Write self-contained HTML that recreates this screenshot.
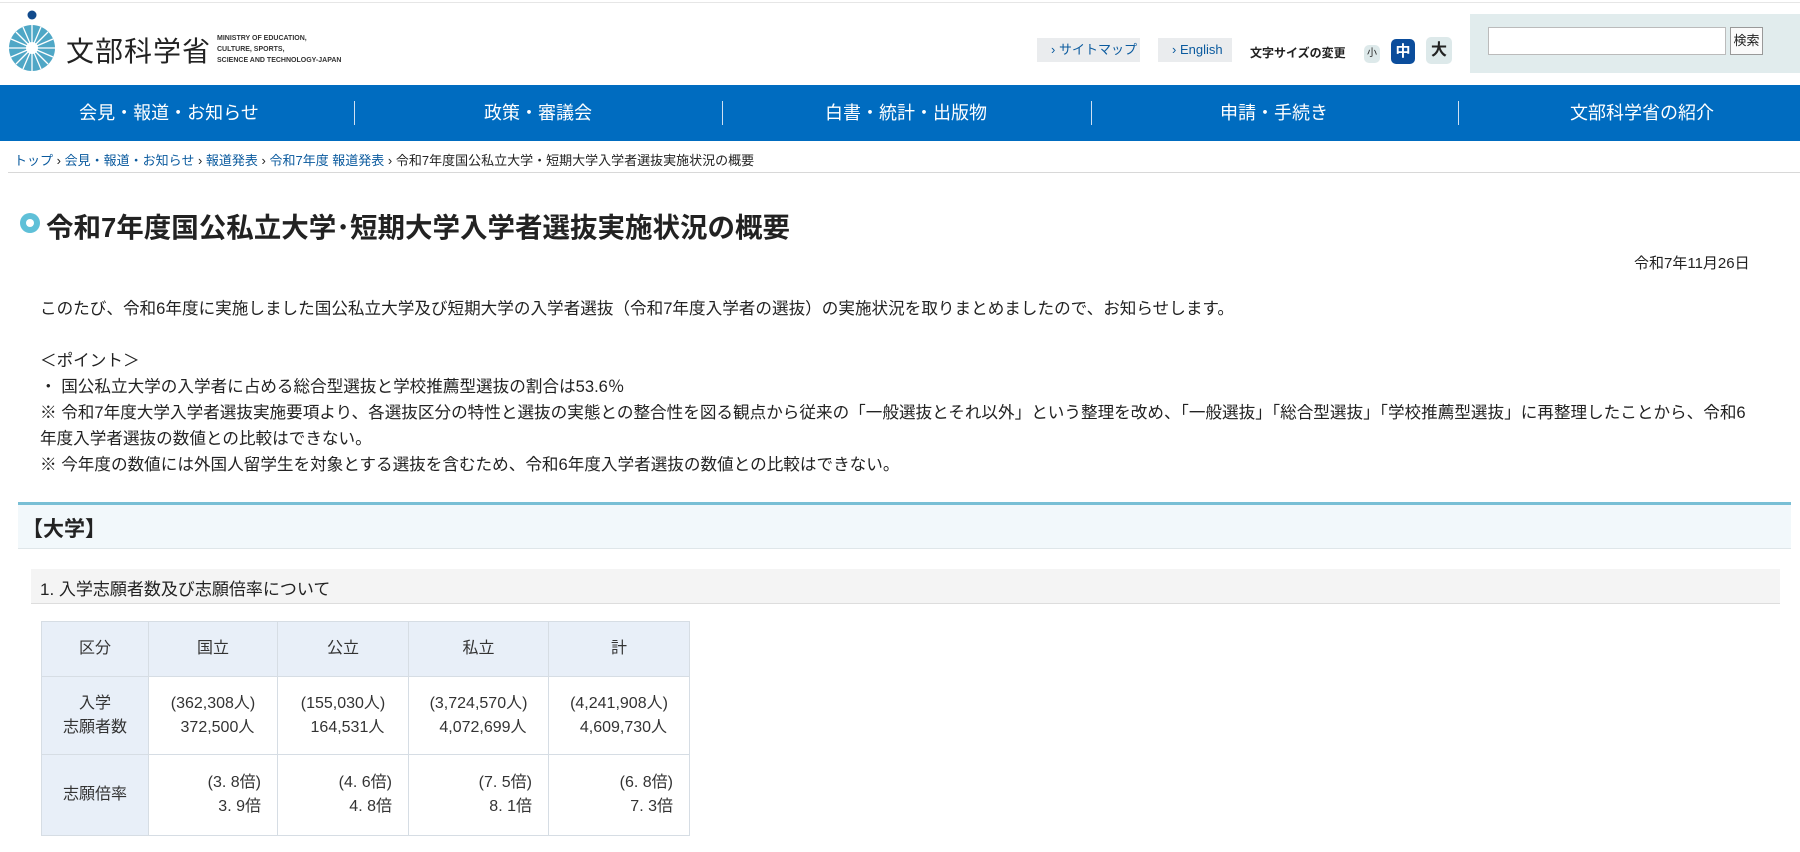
<!DOCTYPE html>
<html><head><meta charset="utf-8"><style>
*{margin:0;padding:0;box-sizing:border-box}
body{width:1800px;height:852px;overflow:hidden;background:#fff;font-family:"Liberation Sans","Noto Sans CJK JP",sans-serif;color:#222;position:relative}
.a{position:absolute;white-space:nowrap}
.nav{position:absolute;left:0;top:85px;width:1800px;height:56px;background:#006cc0}
.nav .i{position:absolute;top:0;height:56px;line-height:56px;color:#fff;font-size:18px;transform:translateX(-50%)}
.nav .s{position:absolute;top:16px;width:1px;height:24px;background:#cfe0f2}
.btn{position:absolute;background:#eaecee;color:#0a5a9e;font-size:13px;line-height:24px;padding-left:14px}
table{position:absolute;left:41px;top:621px;border-collapse:collapse;font-size:16px;color:#333}
td{border:1px solid #d6dde4;text-align:center;line-height:24px}
td.h{background:#e8eff8}
</style></head><body>
<div class="a" style="left:0;top:2px;width:1800px;height:1px;background:#e6e6e6"></div>
<svg class="a" style="left:6px;top:8px" width="54" height="64" viewBox="0 0 54 64">
<circle cx="26" cy="7" r="4.5" fill="#114a8c"/>
<circle cx="26" cy="40" r="23" fill="#4fa7c6"/>
<circle cx="26" cy="40" r="6" fill="#fff"/>
<g stroke="#fff" stroke-width="1.3">
<line x1="26" y1="17" x2="26" y2="63"/><line x1="3" y1="40" x2="49" y2="40"/>
<line x1="10" y1="24" x2="42" y2="56"/><line x1="42" y1="24" x2="10" y2="56"/>
<line x1="17" y1="19" x2="35" y2="61"/><line x1="35" y1="19" x2="17" y2="61"/>
<line x1="5" y1="31" x2="47" y2="49"/><line x1="47" y1="31" x2="5" y2="49"/></g>
</svg>
<div class="a" style="left:66px;top:30px;font-size:28px;letter-spacing:1px;color:#222">文部科学省</div>
<div class="a" style="left:217px;top:33px;font-size:7px;line-height:11px;color:#333;font-weight:bold">MINISTRY OF EDUCATION,<br>CULTURE, SPORTS,<br>SCIENCE AND TECHNOLOGY-JAPAN</div>
<div class="btn" style="left:1037px;top:38px;width:103px">› サイトマップ</div>
<div class="btn" style="left:1158px;top:38px;width:74px">› English</div>
<div class="a" style="left:1250px;top:44px;font-size:12px;font-weight:bold">文字サイズの変更</div>
<div class="a" style="left:1364px;top:45px;width:16px;height:18px;background:#dde9ea;border-radius:5px;font-size:10px;text-align:center;line-height:18px">小</div>
<div class="a" style="left:1391px;top:39px;width:24px;height:25px;background:#0b4d9c;border-radius:5px;font-size:15px;color:#fff;text-align:center;line-height:25px;font-weight:bold">中</div>
<div class="a" style="left:1426px;top:37px;width:26px;height:27px;background:#dde9ea;border-radius:5px;font-size:16px;text-align:center;line-height:27px;font-weight:bold">大</div>
<div class="a" style="left:1470px;top:14px;width:330px;height:59px;background:#e1eced"></div>
<div class="a" style="left:1488px;top:27px;width:238px;height:28px;background:#fff;border:1px solid #bbb"></div>
<div class="a" style="left:1730px;top:27px;width:33px;height:28px;background:#fafafa;border:1px solid #999;font-size:13px;text-align:center;line-height:26px">検索</div>
<div class="nav">
<div class="i" style="left:169px">会見・報道・お知らせ</div><div class="s" style="left:354px"></div>
<div class="i" style="left:538px">政策・審議会</div><div class="s" style="left:722px"></div>
<div class="i" style="left:906px">白書・統計・出版物</div><div class="s" style="left:1091px"></div>
<div class="i" style="left:1274px">申請・手続き</div><div class="s" style="left:1458px"></div>
<div class="i" style="left:1642px">文部科学省の紹介</div>
</div>
<div class="a" style="left:14px;top:150px;font-size:13px;color:#222"><span style="color:#0a5a9e">トップ</span> › <span style="color:#0a5a9e">会見・報道・お知らせ</span> › <span style="color:#0a5a9e">報道発表</span> › <span style="color:#0a5a9e">令和7年度 報道発表</span> › 令和7年度国公私立大学・短期大学入学者選抜実施状況の概要</div>
<div class="a" style="left:8px;top:172px;width:1792px;height:1px;background:#d8d8d8"></div>
<div class="a" style="left:20px;top:213px;width:20px;height:20px;border-radius:50%;background:#5fc0d8"></div>
<div class="a" style="left:26px;top:219px;width:8px;height:8px;border-radius:50%;background:#fff"></div>
<div class="a" style="left:46px;top:205px;font-size:27.5px;font-weight:bold;color:#222">令和7年度国公私立大学･短期大学入学者選抜実施状況の概要</div>
<div class="a" style="left:1634px;top:252px;font-size:15px">令和7年11月26日</div>
<div class="a" style="left:40px;top:296px;font-size:16.6px;line-height:26px;color:#222">このたび、令和6年度に実施しました国公私立大学及び短期大学の入学者選抜（令和7年度入学者の選抜）の実施状況を取りまとめましたので、お知らせします。<br><br>＜ポイント＞<br>・ 国公私立大学の入学者に占める総合型選抜と学校推薦型選抜の割合は53.6％<br>※ 令和7年度大学入学者選抜実施要項より、各選抜区分の特性と選抜の実態との整合性を図る観点から従来の「一般選抜とそれ以外」という整理を改め、「一般選抜」「総合型選抜」「学校推薦型選抜」に再整理したことから、令和6<br>年度入学者選抜の数値との比較はできない。<br>※ 今年度の数値には外国人留学生を対象とする選抜を含むため、令和6年度入学者選抜の数値との比較はできない。</div>
<div class="a" style="left:18px;top:502px;width:1773px;height:47px;background:#f2f8fb;border-top:3px solid #79bfd5;border-bottom:1px solid #dfe6e9"></div>
<div class="a" style="left:22px;top:513px;font-size:21px;font-weight:bold">【大学】</div>
<div class="a" style="left:31px;top:569px;width:1749px;height:35px;background:#f4f4f4;border-bottom:1px solid #ddd"></div>
<div class="a" style="left:40px;top:575px;font-size:17px">1. 入学志願者数及び志願倍率について</div>
<table>
<tr style="height:55px"><td class="h" style="width:107px">区分</td><td class="h" style="width:129px">国立</td><td class="h" style="width:131px">公立</td><td class="h" style="width:140px">私立</td><td class="h" style="width:141px">計</td></tr>
<tr style="height:78px"><td class="h">入学<br>志願者数</td><td>(362,308人)<br>&nbsp;&nbsp;372,500人</td><td>(155,030人)<br>&nbsp;&nbsp;164,531人</td><td>(3,724,570人)<br>&nbsp;&nbsp;4,072,699人</td><td>(4,241,908人)<br>&nbsp;&nbsp;4,609,730人</td></tr>
<tr style="height:81px"><td class="h">志願倍率</td><td style="text-align:right;padding-right:16px">(3. 8倍)<br>3. 9倍</td><td style="text-align:right;padding-right:16px">(4. 6倍)<br>4. 8倍</td><td style="text-align:right;padding-right:16px">(7. 5倍)<br>8. 1倍</td><td style="text-align:right;padding-right:16px">(6. 8倍)<br>7. 3倍</td></tr>
</table>
</body></html>
